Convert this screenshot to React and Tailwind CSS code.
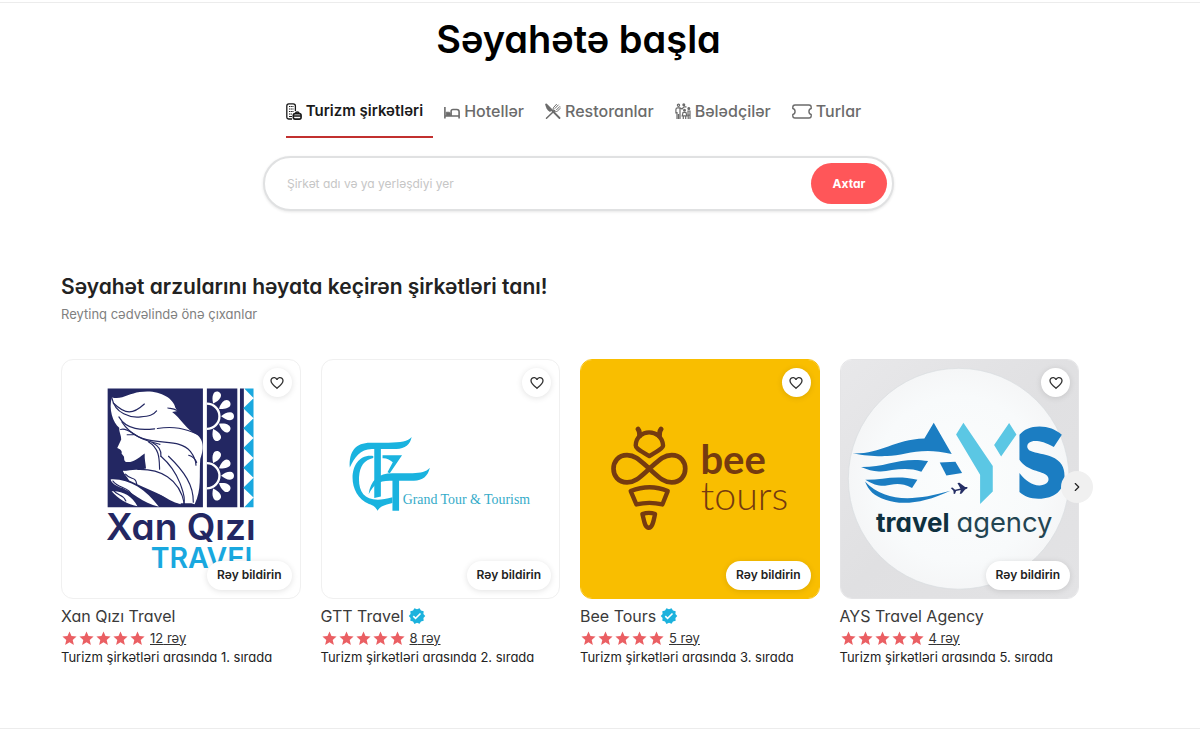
import { useState } from 'react';
import { MdFavoriteBorder, MdStar, MdVerified } from 'react-icons/md';
import { FiChevronRight } from 'react-icons/fi';

function CompanyIcon() {
  return (
    <svg viewBox="0 0 16 17" className="h-[17px] w-4" fill="none" stroke="currentColor" strokeWidth="1.3">
      <path d="M6 16H2.6C1.4 16 .8 15.4 .8 14.2V3C.8 1.6 1.4.8 2.8.8h4.4C8.6.8 9.4 1.6 9.4 3v5" />
      <path d="M3 3.5h4.5M3 6h4.5M3 8.5h4.5M3 11h3" strokeDasharray="1.2 .5" strokeWidth="1" />
      <path d="M3 13.5h3" strokeWidth="1" />
      <rect x="7.3" y="10.6" width="7.8" height="5.5" rx="1.8" strokeWidth="1.6" />
      <path d="M9.5 10.5c0-2 3.5-2 3.5 0M7.5 13h7.5" />
    </svg>
  );
}

function HotelIcon() {
  return (
    <svg viewBox="0 0 16 17" className="h-[17px] w-4" fill="none" stroke="currentColor" strokeWidth="1.6">
      <path d="M.9 4v11.500M.9 13h14.200M15.100 15.500V9c0-1.600-.8-2.500-2.300-2.500H9c-1.300 0-1.900.7-1.900 1.900V13" />
      <path d="M2.2 12.500V9.200h2.600c.9 0 1.5.5 1.5 1.5v1.8z" fill="currentColor" strokeWidth=".8" />
    </svg>
  );
}

function RestaurantIcon() {
  return (
    <svg viewBox="0 0 16 17" className="h-[17px] w-4" fill="none" stroke="currentColor" strokeLinecap="round">
      <path d="M.5 1C.3 4 2 7.2 5 9l1.6-1.4z" fill="currentColor" stroke="none" />
      <path d="M1.2 1.5 14.5 15" strokeWidth="1.8" />
      <path d="M1.5 15.3 9.6 7.5" strokeWidth="1.5" />
      <path d="M11.5 1.3 8.8 4.2C7.8 5.4 8 7 8.9 7.9s2.5 1 3.6.1l2.9-2.8M13.3 2 10 5.4M14.8 3.5 11.5 6.8" strokeWidth="1" />
    </svg>
  );
}

function GuideIcon() {
  return (
    <svg viewBox="0 0 16 17" className="h-[17px] w-4" fill="none" stroke="currentColor" strokeWidth="1.2">
      <circle cx="3.5" cy="2.2" r="1.1" />
      <circle cx="8.8" cy="1.8" r=".9" fill="currentColor" />
      <circle cx="9.5" cy="7.3" r=".9" fill="currentColor" />
      <circle cx="13.8" cy="5.5" r=".9" fill="currentColor" />
      <path d="M.9 10.5V6.5c0-1.2.8-1.7 1.8-1.7h2.1l2.2 1.1 2-2h2.5M2 9v7M5 5v11M3.5 11v5" />
      <path d="M8 9.5h3l.8 3.3H7.2zM8.3 13v3M10.7 13v3M13 8h2v4.2h-2zM13.2 12v4M15 12v4" />
    </svg>
  );
}

function TourIcon() {
  return (
    <svg viewBox="0 0 20 17" className="h-[17px] w-5" fill="none" stroke="currentColor" strokeWidth="1.4" strokeLinejoin="round">
      <path d="M3 2h14c1.400 0 2.200.8 2.200 2.200v1.300c-3 .5-3 5.500 0 6v1.300c0 1.400-.8 2.200-2.200 2.200H3c-1.400 0-2.200-.8-2.200-2.200v-1.300c3-.5 3-5.500 0-6V4.200C.8 2.800 1.600 2 3 2z" />
    </svg>
  );
}

function Petals({ y }) {
  const angles = [-64, -32, 0, 32, 64];

  return (
    <g transform={`translate(444 ${y})`}>
      <path d="M0-38a38 38 0 0 1 0 76" fill="none" stroke="#fff" strokeWidth="7" />
      {angles.map((angle) => (
        <path key={angle} transform={`rotate(${angle})`} d="M43 0C52-7 60-12 70-12c16 0 16 24 0 24-10 0-18-5-27-12z" fill="#fff" />
      ))}
    </g>
  );
}

function XanQiziLogo() {
  return (
    <svg viewBox="6 15 718 718" className="size-full" role="img" aria-label="Xan Qızı Travel">
      <path fill="#232762" d="M144 101h288v359H144zM444 101h92v359h-92zM544 101h12v359h-12z" />
      <path
        fill="#fff"
        d="M157 128c30 8 52-12 84-16 52-9 101 14 108 48l6 9-16 3c26 20 36 42 61 61 34 14 38 46 24 81-4 51 5 92-17 137l-10-3-38 0c-51-26-103-46-150-69l-18-28c28-5 51-3 69-8-1-14-5-26-4-45-11 8-30 24-44 25h-13c-7-3-4-11-6-16l-7-9c3-8-4-14-13-17l12-26c0-13-7-23-6-35-19-16-33-58-22-92z"
      />
      <path fill="#fff" d="M190 350c65 3 138 10 176 101-51-11-78-50-124-64-28-6-44-19-52-37zM153 376c54-3 106 29 146 83-51-12-80-44-110-57-22-7-33-16-36-26zM156 412c33-2 62 14 78 45-34-7-57-22-78-45z" />
      <g fill="none" stroke="#232762" strokeWidth="3.5" strokeLinecap="round">
        <path d="M157 130c9 47 57 61 87 57 25-2 38-5 48-18" />
        <path d="M161 145c38 37 60 34 94 3M178 187c24 41 71 40 108 36" />
        <path d="M183 225c24-6 37 18 66 27 62 19 114 3 145 39 13 17 17 27 17 42" />
        <path d="M187 202c29 45 72 56 115 68M203 241h18" />
        <path d="M294 222c50-8 84 0 123 18M389 303c12 3 19 9 24 22" />
        <path d="M267 262c35 21 33 53 34 83M278 264c20 12 29 22 27 42" />
        <path d="M305 306c34 29 48 57 58 82 7 21 18 42 11 62" />
        <path d="M328 306c48 46 76 88 75 139M235 346c66-2 126 26 141 104" />
        <path d="M198 360c17 20 29 5 34 30M160 381c21 26 49 13 65 56M160 407c15 23 28 10 39 34M326 160c12 2 17 1 28 8" />
      </g>
      <Petals y={185} />
      <Petals y={365} />
      <path fill="#fff" d="M556 101h29v359h-29z" />
      <path fill="#19a8df" d="M557 101h28v29zM554 161l31-30v60zM554 221l31-30v60zM554 281l31-30v60zM554 341l31-30v60zM554 401l31-30v60zM557 460l28-29v29z" />
      <text x="139" y="559" fill="#232762" fontSize="112" fontWeight="600">Xan Qızı</text>
      <text x="274" y="643" fill="#19a8df" fontSize="86" fontWeight="600">TRAVEL</text>
    </svg>
  );
}

function GttLogo() {
  return (
    <svg viewBox="4 15 718 718" className="size-full" role="img" aria-label="GTT Travel">
      <g fill="#1ab3df">
        <path d="M88 340c-3-49 18-75 62-75h55c37 0 59-4 70-17-4 22-20 36-46 36h-74c-36 1-52 25-67 56z" />
        <path d="M162 280h20v148l-20 4z" />
        <path d="M159 305c-77-10-85 118-13 145 16 5 20 10 26 21 6-12 15-15 28-19l17-5v-17c-76 22-104-8-101-61 2-34 16-52 43-58z" />
        <path d="M187 303h59l-37 54-7-3 16-30c-12-9-19-13-31-12z" />
        <path d="M145 421c5-42 30-64 72-64h61c25 0 40-3 52-16-6 26-22 39-48 39h-73c-35 0-49 12-64 41z" />
        <path d="M217 374h20v97h-20z" />
      </g>
      <text x="248" y="449" fill="#35abc9" fontSize="42" className="font-['Liberation_Serif',serif]">
        Grand Tour &amp; Tourism
      </text>
    </svg>
  );
}

function BeeLogo() {
  return (
    <svg viewBox="18 16 712 712" className="size-full bg-[#f9be00]" role="img" aria-label="Bee Tours">
      <g fill="none" stroke="#753b10" strokeWidth="13" strokeLinejoin="round" strokeLinecap="round">
        <path d="M182 272c2-52 78-52 82 0 0 8-16 17-41 32-26-16-41-22-41-32z" />
        <path d="M194 243c-1-9 1-13-5-20M253 243c1-9-1-13 5-20" strokeWidth="15" />
        <path d="M223 342c-29-26-43-41-67-41-54 0-54 82 0 82 24 0 38-15 67-41 29-26 43-41 67-41 54 0 54 82 0 82-24 0-38-15-67-41z" strokeWidth="14" />
        <path d="M167 409c40-16 74-16 111 0l-16 40c-28-7-50-7-78 0z" />
        <path d="M202 478c14-5 26-5 38 0-4 18-7 41-19 41-13 0-14-25-19-41z" />
      </g>
      <text x="376" y="358" fill="#753b10" fontSize="120" fontWeight="700" className="font-['Lato',sans-serif]">bee</text>
      <text x="377" y="465" fill="#753b10" fontSize="118" fontWeight="300" className="font-['Lato',sans-serif]">tours</text>
    </svg>
  );
}

function AysLogo() {
  return (
    <svg viewBox="15 16 712 712" className="size-full bg-linear-to-br from-[#e8e8ea] via-[#e0e0e2] to-[#e3e3e5]" role="img" aria-label="AYS Travel Agency">
      <defs>
        <radialGradient id="disc">
          <stop offset="0" stopColor="#fbfdfd" />
          <stop offset=".75" stopColor="#f8fafb" />
          <stop offset="1" stopColor="#f5f6f7" />
        </radialGradient>
      </defs>
      <circle cx="368" cy="372" r="331" fill="url(#disc)" stroke="#d8dddf" strokeWidth="2" />
      <g fill="#1b7dc2">
        <path d="M49 296c88 2 122-42 216-45l28-47 54 94c-94-24-142 5-194 6-42 1-61-2-104-8z" />
        <path d="M75 337c76 1 119-32 201-18l-20 32c-45-17-90-3-122-1-22 1-37-4-59-13z" />
        <path d="M88 375c52 1 88-16 156 0l-16 25c-39-21-61-9-81-7-20 1-36-4-59-18z" />
        <path d="M87 380c62 64 148 59 256 28-78 37-145 45-195 27-34-12-50-27-61-55z" />
        <path d="M311 323l47-2 20 34-47 7z" />
        <path d="M677 240l-24 37c-30-18-53-20-66-17-17 4-18 22-3 29 14 7 43 9 62 17 29 12 39 31 39 57 0 43-29 69-78 69-25 0-43-7-57-20v-57c18 24 40 38 61 37 24-1 32-17 22-29-15-16-61-13-83-48v-75c14-16 32-25 60-25 26 0 48 8 67 25z" />
      </g>
      <path fill="#5bc7e4" d="M360 239l22-35 88 130v76l-38 38V360zM474 271l45-66 22 34-46 66z" />
      <path fill="#252f65" d="M344 400l5-2 8 7 16-4-9-16 6-1 17 13c9-2 11 4 0 7l-10 12-6 2 3-12-14 3-3 8-4 1-1-10z" />
      <text x="120" y="531" fill="#0e3140" fontSize="78" fontWeight="700">travel</text>
      <text x="361" y="531" fill="#234552" fontSize="82" fontWeight="400">agency</text>
    </svg>
  );
}

const tabs = [
  { id: 'companies', label: 'Turizm şirkətləri', icon: CompanyIcon },
  { id: 'hotels', label: 'Hotellər', icon: HotelIcon },
  { id: 'restaurants', label: 'Restoranlar', icon: RestaurantIcon },
  { id: 'guides', label: 'Bələdçilər', icon: GuideIcon },
  { id: 'tours', label: 'Turlar', icon: TourIcon },
];

const companies = [
  { name: 'Xan Qızı Travel', reviews: 12, rank: 1, verified: false, border: 'border-[#f0f0f0]', logo: XanQiziLogo },
  { name: 'GTT Travel', reviews: 8, rank: 2, verified: true, border: 'border-[#f0f0f0]', logo: GttLogo },
  { name: 'Bee Tours', reviews: 5, rank: 3, verified: true, border: 'border-[#f9be00]', logo: BeeLogo },
  { name: 'AYS Travel Agency', reviews: 4, rank: 5, verified: false, border: 'border-[#e4e4e6]', logo: AysLogo },
];

function CompanyCard({ company }) {
  const Logo = company.logo;

  return (
    <article className="min-w-0">
      <div className={`relative aspect-square overflow-hidden rounded-xl border ${company.border}`}>
        <Logo />
        <button
          type="button"
          aria-label="Seçilmişlərə əlavə et"
          className="absolute top-2 right-2 flex size-[29px] items-center justify-center rounded-full bg-white text-[#333] shadow-[0_1px_6px_rgba(0,0,0,0.12)]"
        >
          <MdFavoriteBorder className="size-4" />
        </button>
        <button
          type="button"
          className="absolute right-2 bottom-2 h-[29px] rounded-full bg-white px-2.5 text-[12px] font-semibold text-[#222] shadow-[0_1px_6px_rgba(0,0,0,0.12)]"
        >
          Rəy bildirin
        </button>
      </div>
      <h3 className="mt-[7px] flex items-center gap-1 text-[16px] leading-5 text-[#3a3a3a]">
        {company.name}
        {company.verified && <MdVerified className="size-[18px] text-[#1cb2dd]" />}
      </h3>
      <div className="mt-1 flex h-[18px] items-center text-[13px] text-[#333]">
        <span className="flex text-[#ea5f63]">
          {[1, 2, 3, 4, 5].map((star) => (
            <MdStar key={star} className="size-[17px]" />
          ))}
        </span>
        <a href="#reviews" className="ml-1 underline">
          {company.reviews} rəy
        </a>
      </div>
      <p className="text-[13px] leading-[18px] whitespace-nowrap text-[#222]">Turizm şirkətləri arasında {company.rank}. sırada</p>
    </article>
  );
}

function App() {
  const [activeTab, setActiveTab] = useState('companies');

  return (
    <div className="bg-white pt-0.5 font-['Inter','Liberation_Sans',sans-serif] [font-feature-settings:'cv11']">
      <main className="border-y border-[#ececec] pr-[43px] pb-[62px]">
        <h1 className="pt-3 text-center text-[38px] leading-[48px] font-semibold text-black">Səyahətə başla</h1>

        <nav className="mt-8 flex justify-center gap-[11px]">
          {tabs.map(({ id, label, icon: Icon }) => (
            <button
              key={id}
              type="button"
              onClick={() => setActiveTab(id)}
              className={`flex h-[43px] items-start gap-1 border-b-2 pt-1 pr-2.5 leading-6 ${
                activeTab === id ? 'border-[#c2302f] text-[15px] font-semibold text-[#1a1a1a]' : 'border-transparent text-[16px] font-medium text-[#6b6b6b]'
              }`}
            >
              <span className="flex h-6 items-center">
                <Icon />
              </span>
              {label}
            </button>
          ))}
        </nav>

        <form
          onSubmit={(event) => event.preventDefault()}
          className="mx-auto mt-[18px] flex h-[55px] w-full max-w-[631px] items-center rounded-full border-2 border-[#e0e1e2] bg-white pr-[5px] pl-[22px] shadow-[0_1px_3px_rgba(0,0,0,0.1)]"
        >
          <label htmlFor="search" className="sr-only">
            Axtarış
          </label>
          <input
            id="search"
            type="text"
            placeholder="Şirkət adı və ya yerləşdiyi yer"
            className="h-8 min-w-0 flex-1 text-[12px] text-[#333] outline-none placeholder:text-[#c6c6c6]"
          />
          <button type="submit" className="h-[41px] w-[76px] rounded-full bg-[#ff5659] text-[12px] font-bold text-white">
            Axtar
          </button>
        </form>

        <section className="mt-[62px] pr-[78px] pl-[61px]">
          <h2 className="text-[21px] leading-7 font-semibold text-[#222]">Səyahət arzularını həyata keçirən şirkətləri tanı!</h2>
          <p className="mt-[3px] text-[13px] leading-5 text-[#808080]">Reytinq cədvəlində önə çıxanlar</p>

          <div className="relative mt-[35px]">
            <div className="grid grid-cols-4 gap-5">
              {companies.map((company) => (
                <CompanyCard key={company.name} company={company} />
              ))}
            </div>
            <button
              type="button"
              aria-label="Növbəti"
              className="absolute top-28 -right-3.5 flex size-8 items-center justify-center rounded-full bg-[#f0f0f0] text-[#222]"
            >
              <FiChevronRight className="size-3.5" />
            </button>
          </div>
        </section>
      </main>
    </div>
  );
}

export default App;
